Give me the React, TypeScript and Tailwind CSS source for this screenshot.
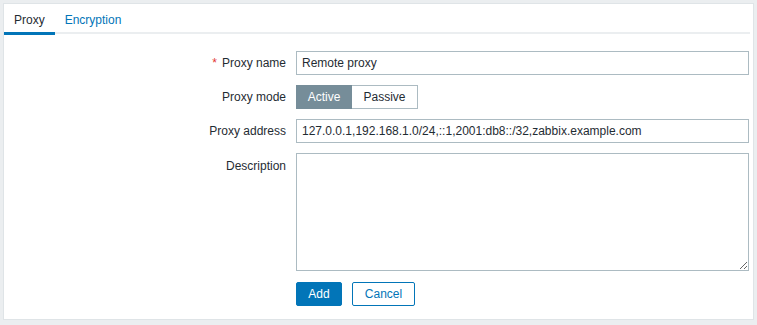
import React from 'react';

const label = 'w-[292px] pr-[10px] text-right shrink-0';

export default function App() {
    return (
        <div className="w-[757px] h-[325px] bg-[#ebeef0] p-[4px] pr-[4px] text-[12px] text-[#1f2c33]" style={{ fontFamily: 'Arial, "Liberation Sans", sans-serif' }}>
            <div className="bg-white border border-[#dfe4e7] h-[317px] -m-px">
                <div className="flex h-[30px] border-b-2 border-[#ebeef0] mr-[3px]">
                    <div className="px-[10px] pt-[7px] border-b-[3px] border-[#0275b8] -mb-[2px] h-[31px]">Proxy</div>
                    <div className="px-[10px] pt-[7px] text-[#0275b8]">Encryption</div>
                </div>
                <div className="pt-[17px] flex flex-col gap-[10px]">
                    <div className="flex items-center">
                        <div className={label}><span className="text-[#e33734] mr-[5px]">*</span>Proxy name</div>
                        <input className="w-[453px] h-[24px] border border-[#acbbc2] px-[5px] outline-none text-[12px]" defaultValue="Remote proxy" />
                    </div>
                    <div className="flex items-center">
                        <div className={label}>Proxy mode</div>
                        <div className="flex h-[24px]">
                            <div className="w-[56px] bg-[#768d99] border border-[#768d99] text-white flex items-center justify-center">Active</div>
                            <div className="w-[66px] border border-[#acbbc2] border-l-0 flex items-center justify-center">Passive</div>
                        </div>
                    </div>
                    <div className="flex items-center">
                        <div className={label}>Proxy address</div>
                        <input className="w-[453px] h-[24px] border border-[#acbbc2] px-[5px] outline-none text-[12px]" defaultValue="127.0.0.1,192.168.1.0/24,::1,2001:db8::/32,zabbix.example.com" />
                    </div>
                    <div className="flex items-start">
                        <div className={`${label} pt-[4px]`}>Description</div>
                        <textarea className="w-[453px] h-[118px] border border-[#acbbc2] px-[5px] outline-none text-[12px] resize-y" />
                    </div>
                    <div className="flex items-center pt-[1px]">
                        <div className={label}></div>
                        <div className="flex gap-[10px]">
                            <button className="w-[46px] h-[24px] bg-[#0275b8] text-white rounded-[2px] border border-[#0275b8]">Add</button>
                            <button className="w-[63px] h-[24px] bg-white text-[#0275b8] rounded-[2px] border border-[#0275b8]">Cancel</button>
                        </div>
                    </div>
                </div>
            </div>
        </div>
    );
}
